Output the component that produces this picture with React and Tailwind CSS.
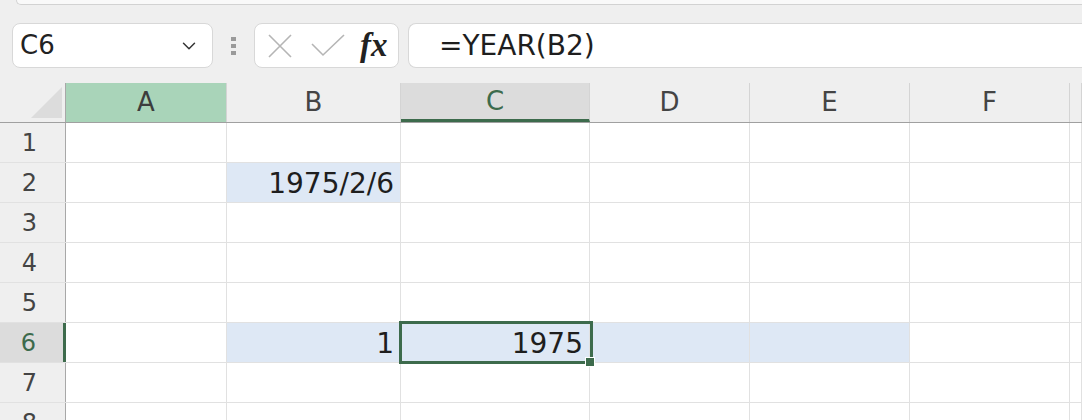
import { ChevronDown } from "lucide-react";

const cols = [
  { id: "A", w: "w-[161px]" },
  { id: "B", w: "w-[174px]" },
  { id: "C", w: "w-[189px]" },
  { id: "D", w: "w-[160px]" },
  { id: "E", w: "w-[160px]" },
  { id: "F", w: "w-[160px]" },
  { id: "G", w: "flex-1" },
];

// row -> col -> { text, blue }
const cells = {
  2: { B: { text: "1975/2/6", blue: true } },
  6: {
    B: { text: "1", blue: true },
    C: { text: "1975", blue: true },
    D: { blue: true },
    E: { blue: true },
  },
};

const ColHeader = ({ id, w }) => {
  let cls = "bg-[#efefef] text-[#444]";
  if (id === "A") cls = "bg-[#a9d4b9] text-[#3d3d3d]";
  if (id === "C") cls = "bg-[#dcdcdc] text-[#3d6b4c] border-b-[3px] border-b-[#3d6b4c]";
  return (
    <div
      className={`${w} h-full flex items-center justify-center border-r border-r-[#d4d4d4] text-[26px] ${cls}`}
    >
      {id === "G" ? "" : id}
    </div>
  );
};

const Row = ({ n }) => {
  const active = n === 6;
  return (
    <div className="flex h-[40px] bg-white border-b border-[#e1e1e1]">
      <div
        className={`w-[66px] shrink-0 flex items-center justify-center pr-[6px] text-[24px] ${
          active
            ? "bg-[#dcdcdc] text-[#3d6b4c] border-r-[3px] border-r-[#3d6b4c]"
            : "bg-[#efefef] text-[#444] border-r border-r-[#a8a8a8]"
        }`}
      >
        {n}
      </div>
      {cols.map((c) => {
        const cell = (cells[n] || {})[c.id] || {};
        return (
          <div
            key={c.id}
            className={`${c.w} shrink-0 flex items-center justify-end pr-[6px] pt-[3px] border-r border-[#e1e1e1] text-[28px] text-[#1e1e1e] ${
              cell.blue ? "bg-[#dee8f5]" : ""
            }`}
          >
            {cell.text}
          </div>
        );
      })}
    </div>
  );
};

export default function App() {
  return (
    <div className="w-[1082px] h-[420px] overflow-hidden bg-[#efefef] font-['DejaVu_Sans','Noto_Sans_CJK_JP',sans-serif]">
      {/* ribbon edge */}
      <div className="h-[6px] pl-[16px]">
        <div className="h-[5px] rounded-bl-[12px] border-b border-l border-[#d2d2d2] bg-[#f9f9f9]" />
      </div>

      {/* formula bar */}
      <div className="mt-[17px] flex h-[45px] pl-[12px]">
        <div className="w-[201px] flex items-center justify-between rounded-[8px] border border-[#d8d8d8] bg-white pl-[7px] pr-[12px]">
          <span className="text-[26px] text-[#222]">C6</span>
          <ChevronDown className="w-[22px] h-[22px] text-[#333]" strokeWidth={1.6} />
        </div>
        <div className="w-[41px] flex flex-col items-center justify-center gap-[3px]">
          <span className="w-[5px] h-[4px] bg-[#9a9a9a]" />
          <span className="w-[5px] h-[4px] bg-[#9a9a9a]" />
          <span className="w-[5px] h-[4px] bg-[#9a9a9a]" />
        </div>
        <div className="w-[145px] flex items-center rounded-[8px] border border-[#d8d8d8] bg-white pl-[12px]">
          <svg width="26" height="26" viewBox="0 0 26 26" className="shrink-0">
            <path d="M2 2 L24 24 M24 2 L2 24" stroke="#b5b5b5" strokeWidth="1.6" fill="none" />
          </svg>
          <svg width="34" height="24" viewBox="0 0 34 24" className="ml-[18px] shrink-0">
            <path d="M1 10 L12 21 L33 1" stroke="#b5b5b5" strokeWidth="1.6" fill="none" />
          </svg>
          <span className="ml-[15px] font-['Liberation_Serif',serif] italic font-bold text-[33px] leading-none text-[#222]">
            fx
          </span>
        </div>
        <div className="flex-1 ml-[9px] flex items-center rounded-l-[8px] border border-r-0 border-[#d8d8d8] bg-white pl-[30px]">
          <span className="text-[28px] text-[#1e1e1e]">=YEAR(B2)</span>
        </div>
      </div>

      {/* grid */}
      <div className="relative mt-[15px]">
        <div className="flex h-[40px] border-b border-[#a0a0a0]">
          <div className="w-[66px] shrink-0 relative border-r border-[#a8a8a8] bg-[#efefef]">
            <svg width="31" height="31" viewBox="0 0 31 31" className="absolute right-[3px] bottom-[4px]">
              <path d="M31 0 L31 31 L0 31 Z" fill="#dcdcdc" />
            </svg>
          </div>
          {cols.map((c) => (
            <ColHeader key={c.id} {...c} />
          ))}
        </div>
        {[1, 2, 3, 4, 5, 6, 7, 8].map((n) => (
          <Row key={n} n={n} />
        ))}

        {/* active cell */}
        <div className="absolute left-[399px] top-[238px] w-[194px] h-[43px] border-[3px] border-[#3d6b4c]" />
        <div className="absolute left-[586px] top-[275px] w-[8px] h-[8px] bg-[#3d6b4c] outline outline-1 outline-white" />
      </div>
    </div>
  );
}
